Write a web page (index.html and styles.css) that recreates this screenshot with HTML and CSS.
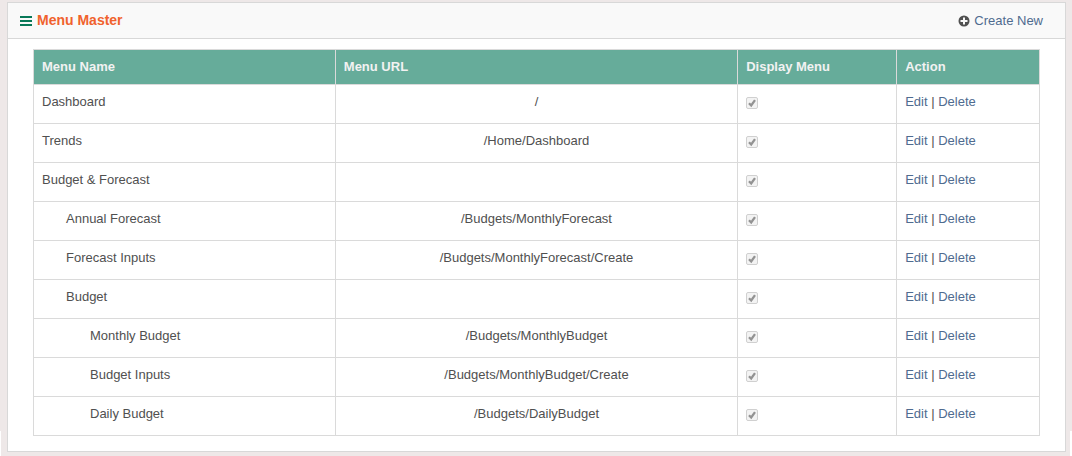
FILE: index.html
```html
<!DOCTYPE html>
<html lang="en">
<head>
<meta charset="utf-8">
<title>Menu Master</title>
<link rel="stylesheet" href="styles.css">
</head>
<body>
<main class="panel">
  <header class="panel-header">
    <h1 class="panel-title">
      <svg class="icon-bars" viewBox="0 0 12 10" aria-hidden="true"><path d="M0 0h12v2H0zM0 4h12v2H0zM0 8h12v2H0z"/></svg>
      Menu Master
    </h1>
    <div class="create">
      <svg class="icon-plus" viewBox="0 0 12 12" aria-hidden="true"><circle cx="6" cy="6" r="5.5"/><path d="M5 2.5h2V5h2.5v2H7v2.5H5V7H2.5V5H5z"/></svg>
      <a href="#create">Create New</a>
    </div>
  </header>
  <div class="panel-body">
    <table class="menu-table">
      <colgroup><col class="col-name"><col class="col-url"><col class="col-display"><col class="col-action"></colgroup>
      <thead>
        <tr><th scope="col">Menu Name</th><th scope="col">Menu URL</th><th scope="col">Display Menu</th><th scope="col">Action</th></tr>
      </thead>
      <tbody>
        <tr><td>Dashboard</td><td class="url">/</td><td><input class="check" type="checkbox" aria-label="Display Dashboard" checked disabled></td><td><a href="#edit">Edit</a> | <a href="#delete">Delete</a></td></tr>
        <tr><td>Trends</td><td class="url">/Home/Dashboard</td><td><input class="check" type="checkbox" aria-label="Display Trends" checked disabled></td><td><a href="#edit">Edit</a> | <a href="#delete">Delete</a></td></tr>
        <tr><td>Budget &amp; Forecast</td><td class="url"></td><td><input class="check" type="checkbox" aria-label="Display Budget &amp; Forecast" checked disabled></td><td><a href="#edit">Edit</a> | <a href="#delete">Delete</a></td></tr>
        <tr><td class="level-2">Annual Forecast</td><td class="url">/Budgets/MonthlyForecast</td><td><input class="check" type="checkbox" aria-label="Display Annual Forecast" checked disabled></td><td><a href="#edit">Edit</a> | <a href="#delete">Delete</a></td></tr>
        <tr><td class="level-2">Forecast Inputs</td><td class="url">/Budgets/MonthlyForecast/Create</td><td><input class="check" type="checkbox" aria-label="Display Forecast Inputs" checked disabled></td><td><a href="#edit">Edit</a> | <a href="#delete">Delete</a></td></tr>
        <tr><td class="level-2">Budget</td><td class="url"></td><td><input class="check" type="checkbox" aria-label="Display Budget" checked disabled></td><td><a href="#edit">Edit</a> | <a href="#delete">Delete</a></td></tr>
        <tr><td class="level-3">Monthly Budget</td><td class="url">/Budgets/MonthlyBudget</td><td><input class="check" type="checkbox" aria-label="Display Monthly Budget" checked disabled></td><td><a href="#edit">Edit</a> | <a href="#delete">Delete</a></td></tr>
        <tr><td class="level-3">Budget Inputs</td><td class="url">/Budgets/MonthlyBudget/Create</td><td><input class="check" type="checkbox" aria-label="Display Budget Inputs" checked disabled></td><td><a href="#edit">Edit</a> | <a href="#delete">Delete</a></td></tr>
        <tr><td class="level-3">Daily Budget</td><td class="url">/Budgets/DailyBudget</td><td><input class="check" type="checkbox" aria-label="Display Daily Budget" checked disabled></td><td><a href="#edit">Edit</a> | <a href="#delete">Delete</a></td></tr>
      </tbody>
    </table>
  </div>
</main>
</body>
</html>
```
FILE: styles.css
```css
* { box-sizing: border-box; }

html { background: #fff; }

body {
  margin: 0;
  padding: 2px 6px 4px 7px;
  background:
    linear-gradient(#fff, #fff) left bottom / 1px 25px no-repeat,
    linear-gradient(#fff, #fff) right bottom / 2px 25px no-repeat,
    #eee8e8;
  color: #505050;
  font: 13px/19px "Liberation Sans", Arial, sans-serif;
}

a { color: #4f6b8f; text-decoration: none; }

.panel { border: 1px solid #d8d8d8; background: #fff; }

.panel-header {
  display: flex;
  align-items: center;
  justify-content: space-between;
  height: 36px;
  padding: 0 22px 0 12px;
  border-bottom: 1px solid #d8d8d8;
  background: #f9f9f9;
}

.panel-title {
  display: flex;
  align-items: center;
  gap: 5px;
  margin: 0;
  color: #f0622d;
  font-size: 14px;
}

.icon-bars { width: 12px; height: 10px; fill: #087858; }

.create { display: flex; align-items: center; gap: 4px; }

.icon-plus { width: 12px; height: 12px; fill: #505050; }
.icon-plus path { fill: #f9f9f9; }

.panel-body { padding: 10px 25px 15px; }

.menu-table {
  width: 100%;
  border-collapse: collapse;
  table-layout: fixed;
}

.col-name { width: 30%; }
.col-url { width: 40%; }
.col-display { width: 15.8%; }
.col-action { width: 14.2%; }

.menu-table th,
.menu-table td {
  border: 1px solid #dadada;
  padding: 7px 8px;
  text-align: left;
  vertical-align: top;
}

.menu-table th {
  height: 35px;
  background: #66ac9a;
  color: #f2f2f2;
}

.menu-table td { height: 39px; }
.menu-table .url { text-align: center; }
.menu-table .level-2 { padding-left: 32px; }
.menu-table .level-3 { padding-left: 56px; }

.check {
  display: block;
  appearance: none;
  width: 12px;
  height: 12px;
  margin: 5px 0 0;
  border: 1px solid #d0d0d0;
  border-radius: 2px;
  background: #f3f3f3 url("data:image/svg+xml,%3Csvg xmlns='http://www.w3.org/2000/svg' viewBox='0 0 10 10'%3E%3Cpath d='M2 5.2 4.2 7.5 8 2.2' fill='none' stroke='%23939393' stroke-width='2.3'/%3E%3C/svg%3E") center / 10px 10px no-repeat;
}
```
